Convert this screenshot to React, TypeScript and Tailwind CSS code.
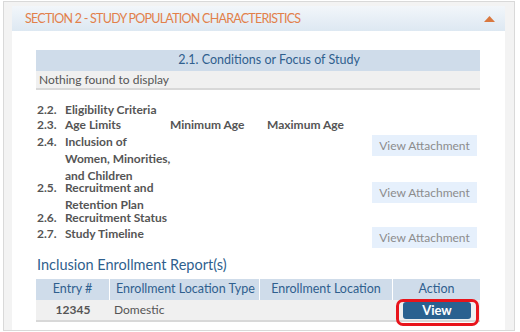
import React from "react";

const font = { fontFamily: "Lato, 'Liberation Sans', sans-serif" };

function Lines({ lines }: { lines: string[] }) {
  return (
    <div className="flex flex-col gap-[5px]">
      {lines.map((l, i) => (
        <div key={i} className="h-[12px] leading-[12px] whitespace-nowrap">{l}</div>
      ))}
    </div>
  );
}

function Item({ num, lines }: { num: string; lines: string[] }) {
  return (
    <div className="flex items-start">
      <div className="w-[28px] shrink-0 h-[12px] leading-[12px]">{num}</div>
      <Lines lines={lines} />
    </div>
  );
}

function Attach({ className }: { className: string }) {
  return (
    <button className={`mr-[3px] w-[105px] h-[21px] bg-[#e6f0fc] text-[#8c8c8c] font-normal text-[12px] ${className}`}>View Attachment</button>
  );
}

export default function App() {
  return (
    <div className="w-[520px] h-[332px] bg-white overflow-hidden" style={font}>
      <div className="mt-[1px] ml-[3px] w-[512px] h-[330px] border border-[#d9d9d9] bg-[#f3f3f3] pl-[8px] pr-[9px] pt-[4px] flex flex-col">
        <div className="bg-white flex-1 flex flex-col">
          <div className="h-[25px] bg-gradient-to-b from-[#f2f6fa] to-[#dde8f2] flex items-center justify-between pl-[13px] pr-[10px]">
            <span className="text-[#e2804a] text-[12.5px] tracking-[-0.75px] pt-[1px]">SECTION 2 - STUDY POPULATION CHARACTERISTICS</span>
            <svg width="11" height="6" viewBox="0 0 11 6"><polygon points="5.5,0 11,6 0,6" fill="#d9783f" /></svg>
          </div>
          <div className="pl-[24px] pr-[25px] pt-[19px]">
            <div className="border-b-2 border-[#d8d8d8]">
              <div className="h-[21px] bg-[#cfdcea] text-[#2f5f8e] text-[12.5px] flex items-center justify-center pl-[22px]">2.1. Conditions or Focus of Study</div>
              <div className="h-[17px] bg-[#f0f0f0] text-[#555] text-[12px] flex items-center pl-[3px]">Nothing found to display</div>
            </div>
            <div className="mt-[14px] text-[12px] text-[#555] font-bold pl-[1px] flex flex-col">
              <div className="mb-[3px]">
                <Item num="2.2." lines={["Eligibility Criteria"]} />
              </div>
              <div className="flex mb-[5px] h-[12px] leading-[12px]">
                <div className="w-[28px]">2.3.</div>
                <div className="w-[105px]">Age Limits</div>
                <div className="w-[97px]">Minimum Age</div>
                <div>Maximum Age</div>
              </div>
              <div className="flex justify-between items-start">
                <Item num="2.4." lines={["Inclusion of", "Women, Minorities,", "and Children"]} />
                <Attach className="mt-[-1px]" />
              </div>
              <div className="flex justify-between items-start mb-[1px]">
                <Item num="2.5." lines={["Recruitment and", "Retention Plan"]} />
                <Attach className="" />
              </div>
              <div className="mb-[4px]">
                <Item num="2.6." lines={["Recruitment Status"]} />
              </div>
              <div className="flex justify-between items-start">
                <Item num="2.7." lines={["Study Timeline"]} />
                <Attach className="mt-[-1px]" />
              </div>
            </div>
            <div className="mt-[7px] text-[14.5px] text-[#2f5f8e] pl-[1px] h-[20px] leading-[20px]">Inclusion Enrollment Report(s)</div>
            <div className="mt-[4px] border-b-2 border-[#d8d8d8]">
              <div className="h-[21px] bg-[#cfdcea] text-[#2f5f8e] text-[12.5px] flex">
                <div className="w-[74px] flex items-center justify-center border-r border-white">Entry #</div>
                <div className="w-[150px] flex items-center pl-[6px] border-r border-white whitespace-nowrap">Enrollment Location Type</div>
                <div className="w-[133px] flex items-center justify-center border-r border-white whitespace-nowrap">Enrollment Location</div>
                <div className="flex-1 flex items-center justify-center">Action</div>
              </div>
              <div className="h-[20px] bg-[#f0f0f0] text-[12px] text-[#555] flex items-center">
                <div className="w-[74px] text-center font-bold">12345</div>
                <div className="w-[150px] pl-[4px]">Domestic</div>
                <div className="w-[133px]"></div>
                <div className="flex-1 flex justify-center relative">
                  <div className="absolute left-[3px] top-[-3px] w-[83px] h-[27px] border-[3px] border-[#e8141b] rounded-[7px]"></div>
                  <button className="ml-[1px] w-[68px] h-[17px] bg-[#2a6190] text-white font-bold text-[13px] rounded-[3px] leading-[17px]">View</button>
                </div>
              </div>
            </div>
          </div>
        </div>
      </div>
    </div>
  );
}
